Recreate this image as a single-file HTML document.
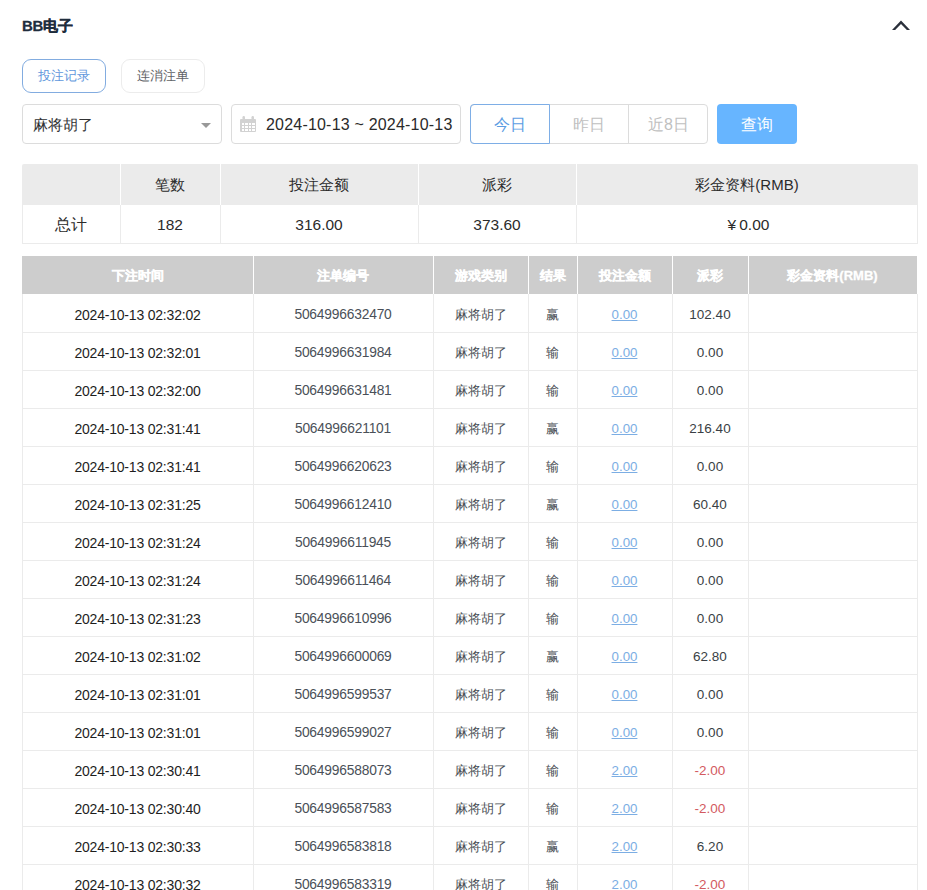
<!DOCTYPE html>
<html><head><meta charset="utf-8">
<style>
*{box-sizing:border-box;margin:0;padding:0}
html,body{width:927px;height:890px;overflow:hidden;background:#fff;font-family:"Liberation Sans",sans-serif;color:#303133}
.abs{position:absolute}
.title{position:absolute;left:22px;top:16px;font-size:15px;font-weight:bold;color:#1f2d3d;-webkit-text-stroke:0.3px #1f2d3d;line-height:20px;white-space:nowrap}
.tab{position:absolute;top:59px;height:34px;width:84px;border-radius:9px;font-size:13px;line-height:32px;text-align:center;white-space:nowrap}
.tab1{left:22px;border:1px solid #82ace0;color:#5f97dc}
.tab2{left:121px;border:1px solid #ececec;color:#606266}
.sel{position:absolute;left:22px;top:104px;width:200px;height:40px;border:1px solid #dcdcdc;border-radius:4px;font-size:15px;line-height:40px;padding-left:10px;color:#303133}
.tri{position:absolute;left:178px;top:18px;width:0;height:0;border-left:5px solid transparent;border-right:5px solid transparent;border-top:5px solid #999}
.date{position:absolute;left:231px;top:104px;width:230px;height:40px;border:1px solid #dcdcdc;border-radius:4px;font-size:16px;line-height:40px;color:#2a2a2a;white-space:nowrap}
.date .txt{position:absolute;left:34px;top:0;letter-spacing:0.2px}
.bgrp{position:absolute;left:470px;top:104px;width:238px;height:40px;border:1px solid #dcdcdc;border-radius:4px}
.bgb{position:absolute;top:-1px;height:40px;font-size:16px;line-height:41px;text-align:center;color:#bfbfbf;white-space:nowrap}
.qry{position:absolute;left:717px;top:104px;width:80px;height:40px;border-radius:4px;background:#67b5ff;color:#fff;font-size:16px;line-height:41px;text-align:center}
.sumh{position:absolute;left:22px;top:164px;width:896px;height:41px;background:#ebebeb;border-radius:2px 2px 0 0}
.sumb{position:absolute;left:22px;top:205px;width:896px;height:39px;border:1px solid #ebebeb;border-top:none}
.svl{position:absolute;top:164px;width:1px;height:41px;background:#fff}
.sbl{position:absolute;top:205px;width:1px;height:38px;background:#ebebeb}
.sh{position:absolute;top:164px;height:41px;font-size:15px;line-height:42px;text-align:center;color:#2b2b2b;white-space:nowrap}
.sb{position:absolute;top:205px;height:38px;font-size:15.5px;line-height:40px;text-align:center;color:#2b2b2b;white-space:nowrap}
.vl{position:absolute;top:294px;width:1px;height:600px;background:#ebebeb}
.hl{position:absolute;left:22px;width:896px;height:1px;background:#ebebeb}
.thead{position:absolute;left:22px;top:256px;width:895px;height:38px;background:#cdcdcd}
.thl{position:absolute;top:256px;width:1px;height:38px;background:#fff}
.th{position:absolute;top:256px;height:38px;line-height:40px;text-align:center;color:#fff;font-weight:bold;font-size:13px;white-space:nowrap;-webkit-text-stroke:0.3px #fff}
.td{position:absolute;height:38px;line-height:42px;text-align:center;font-size:13px;color:#4a4f55;white-space:nowrap}
.c1{font-size:14px;letter-spacing:-0.2px;color:#1e1e1e}
.c2{font-size:13.8px;letter-spacing:-0.2px;color:#4a5058}
.c3,.c4{color:#4a4f55;font-size:13.3px;line-height:41px}
.c5{font-size:13.3px}
.c6{color:#3a3f45;font-size:13.5px}
.lnk{color:#7caee4;text-decoration:underline}
.neg{color:#d35a60}
</style></head><body>
<div class="title"><span style="letter-spacing:-0.4px">BB</span><span style="margin-left:0.4px">电子</span></div>
<svg class="abs" style="left:0;top:0" width="927" height="40"><polygon points="901,20.4 910,30 906.9,30 901,23.9 895.1,30 892,30" fill="#2a303b"/></svg>
<div class="tab tab1">投注记录</div>
<div class="tab tab2">连消注单</div>
<div class="sel">麻将胡了<div class="tri"></div></div>
<div class="date"><svg class="abs" style="left:8px;top:11px" width="16" height="17" viewBox="0 0 16 17"><rect x="0" y="3" width="16" height="13" rx="1" fill="#d2d2d2"/><rect x="2.5" y="0" width="2.5" height="5" rx="1.2" fill="#d2d2d2"/><rect x="11.5" y="0" width="2.5" height="5" rx="1.2" fill="#d2d2d2"/><g fill="#fff"><rect x="2" y="7" width="2" height="2"/><rect x="5" y="7" width="3" height="2"/><rect x="9" y="7" width="2" height="2"/><rect x="12" y="7" width="3" height="2"/><rect x="2" y="10" width="2" height="2"/><rect x="5" y="10" width="3" height="2"/><rect x="9" y="10" width="2" height="2"/><rect x="12" y="10" width="3" height="2"/><rect x="2" y="13" width="2" height="2"/><rect x="5" y="13" width="3" height="2"/><rect x="9" y="13" width="2" height="2"/><rect x="12" y="13" width="3" height="2"/></g></svg><span class="txt">2024-10-13 ~ 2024-10-13</span></div>
<div class="bgrp">
<div class="bgb" style="left:-1px;width:80px;border:1px solid #7eaee6;border-radius:4px 0 0 4px;color:#5b9de3;line-height:39px">今日</div>
<div class="bgb" style="left:79px;width:78px">昨日</div>
<div class="bgb" style="left:157px;width:80px;border-left:1px solid #dcdcdc;line-height:41px">近8日</div>
</div>
<div class="qry">查询</div>
<div class="sumh"></div>
<div class="sumb"></div>
<div class="svl" style="left:120px"></div><div class="svl" style="left:220px"></div><div class="svl" style="left:418px"></div><div class="svl" style="left:576px"></div>
<div class="sbl" style="left:120px"></div><div class="sbl" style="left:220px"></div><div class="sbl" style="left:418px"></div><div class="sbl" style="left:576px"></div>
<div class="sh" style="left:120px;width:100px">笔数</div>
<div class="sh" style="left:220px;width:198px">投注金额</div>
<div class="sh" style="left:418px;width:158px">派彩</div>
<div class="sh" style="left:576px;width:342px">彩金资料(RMB)</div>
<div class="sb" style="left:22px;width:98px">总计</div>
<div class="sb" style="left:120px;width:100px">182</div>
<div class="sb" style="left:220px;width:198px">316.00</div>
<div class="sb" style="left:418px;width:158px">373.60</div>
<div class="sb" style="left:576px;width:342px"><span style="padding-left:3px"><span style="margin-right:3px">¥</span>0.00</span></div>
<div class="vl" style="left:22px"></div>
<div class="vl" style="left:253px"></div>
<div class="vl" style="left:433px"></div>
<div class="vl" style="left:528px"></div>
<div class="vl" style="left:577px"></div>
<div class="vl" style="left:672px"></div>
<div class="vl" style="left:748px"></div>
<div class="vl" style="left:917px"></div>
<div class="hl" style="top:332px"></div>
<div class="hl" style="top:370px"></div>
<div class="hl" style="top:408px"></div>
<div class="hl" style="top:446px"></div>
<div class="hl" style="top:484px"></div>
<div class="hl" style="top:522px"></div>
<div class="hl" style="top:560px"></div>
<div class="hl" style="top:598px"></div>
<div class="hl" style="top:636px"></div>
<div class="hl" style="top:674px"></div>
<div class="hl" style="top:712px"></div>
<div class="hl" style="top:750px"></div>
<div class="hl" style="top:788px"></div>
<div class="hl" style="top:826px"></div>
<div class="hl" style="top:864px"></div>
<div class="hl" style="top:902px"></div>
<div class="thead"></div>
<div class="thl" style="left:253px"></div>
<div class="thl" style="left:433px"></div>
<div class="thl" style="left:528px"></div>
<div class="thl" style="left:577px"></div>
<div class="thl" style="left:672px"></div>
<div class="thl" style="left:748px"></div>
<div class="th" style="left:22px;width:231px">下注时间</div>
<div class="th" style="left:253px;width:180px">注单编号</div>
<div class="th" style="left:433px;width:95px">游戏类别</div>
<div class="th" style="left:528px;width:49px">结果</div>
<div class="th" style="left:577px;width:95px">投注金额</div>
<div class="th" style="left:672px;width:76px">派彩</div>
<div class="th" style="left:748px;width:169px">彩金资料(RMB)</div>
<div class="td c1" style="left:22px;width:231px;top:294px">2024-10-13 02:32:02</div>
<div class="td c2" style="left:253px;width:180px;top:294px">5064996632470</div>
<div class="td c3" style="left:433px;width:95px;top:294px">麻将胡了</div>
<div class="td c4" style="left:528px;width:49px;top:294px">赢</div>
<div class="td c5" style="left:577px;width:95px;top:294px"><span class="lnk">0.00</span></div>
<div class="td c6" style="left:672px;width:76px;top:294px">102.40</div>
<div class="td c1" style="left:22px;width:231px;top:332px">2024-10-13 02:32:01</div>
<div class="td c2" style="left:253px;width:180px;top:332px">5064996631984</div>
<div class="td c3" style="left:433px;width:95px;top:332px">麻将胡了</div>
<div class="td c4" style="left:528px;width:49px;top:332px">输</div>
<div class="td c5" style="left:577px;width:95px;top:332px"><span class="lnk">0.00</span></div>
<div class="td c6" style="left:672px;width:76px;top:332px">0.00</div>
<div class="td c1" style="left:22px;width:231px;top:370px">2024-10-13 02:32:00</div>
<div class="td c2" style="left:253px;width:180px;top:370px">5064996631481</div>
<div class="td c3" style="left:433px;width:95px;top:370px">麻将胡了</div>
<div class="td c4" style="left:528px;width:49px;top:370px">输</div>
<div class="td c5" style="left:577px;width:95px;top:370px"><span class="lnk">0.00</span></div>
<div class="td c6" style="left:672px;width:76px;top:370px">0.00</div>
<div class="td c1" style="left:22px;width:231px;top:408px">2024-10-13 02:31:41</div>
<div class="td c2" style="left:253px;width:180px;top:408px">5064996621101</div>
<div class="td c3" style="left:433px;width:95px;top:408px">麻将胡了</div>
<div class="td c4" style="left:528px;width:49px;top:408px">赢</div>
<div class="td c5" style="left:577px;width:95px;top:408px"><span class="lnk">0.00</span></div>
<div class="td c6" style="left:672px;width:76px;top:408px">216.40</div>
<div class="td c1" style="left:22px;width:231px;top:446px">2024-10-13 02:31:41</div>
<div class="td c2" style="left:253px;width:180px;top:446px">5064996620623</div>
<div class="td c3" style="left:433px;width:95px;top:446px">麻将胡了</div>
<div class="td c4" style="left:528px;width:49px;top:446px">输</div>
<div class="td c5" style="left:577px;width:95px;top:446px"><span class="lnk">0.00</span></div>
<div class="td c6" style="left:672px;width:76px;top:446px">0.00</div>
<div class="td c1" style="left:22px;width:231px;top:484px">2024-10-13 02:31:25</div>
<div class="td c2" style="left:253px;width:180px;top:484px">5064996612410</div>
<div class="td c3" style="left:433px;width:95px;top:484px">麻将胡了</div>
<div class="td c4" style="left:528px;width:49px;top:484px">赢</div>
<div class="td c5" style="left:577px;width:95px;top:484px"><span class="lnk">0.00</span></div>
<div class="td c6" style="left:672px;width:76px;top:484px">60.40</div>
<div class="td c1" style="left:22px;width:231px;top:522px">2024-10-13 02:31:24</div>
<div class="td c2" style="left:253px;width:180px;top:522px">5064996611945</div>
<div class="td c3" style="left:433px;width:95px;top:522px">麻将胡了</div>
<div class="td c4" style="left:528px;width:49px;top:522px">输</div>
<div class="td c5" style="left:577px;width:95px;top:522px"><span class="lnk">0.00</span></div>
<div class="td c6" style="left:672px;width:76px;top:522px">0.00</div>
<div class="td c1" style="left:22px;width:231px;top:560px">2024-10-13 02:31:24</div>
<div class="td c2" style="left:253px;width:180px;top:560px">5064996611464</div>
<div class="td c3" style="left:433px;width:95px;top:560px">麻将胡了</div>
<div class="td c4" style="left:528px;width:49px;top:560px">输</div>
<div class="td c5" style="left:577px;width:95px;top:560px"><span class="lnk">0.00</span></div>
<div class="td c6" style="left:672px;width:76px;top:560px">0.00</div>
<div class="td c1" style="left:22px;width:231px;top:598px">2024-10-13 02:31:23</div>
<div class="td c2" style="left:253px;width:180px;top:598px">5064996610996</div>
<div class="td c3" style="left:433px;width:95px;top:598px">麻将胡了</div>
<div class="td c4" style="left:528px;width:49px;top:598px">输</div>
<div class="td c5" style="left:577px;width:95px;top:598px"><span class="lnk">0.00</span></div>
<div class="td c6" style="left:672px;width:76px;top:598px">0.00</div>
<div class="td c1" style="left:22px;width:231px;top:636px">2024-10-13 02:31:02</div>
<div class="td c2" style="left:253px;width:180px;top:636px">5064996600069</div>
<div class="td c3" style="left:433px;width:95px;top:636px">麻将胡了</div>
<div class="td c4" style="left:528px;width:49px;top:636px">赢</div>
<div class="td c5" style="left:577px;width:95px;top:636px"><span class="lnk">0.00</span></div>
<div class="td c6" style="left:672px;width:76px;top:636px">62.80</div>
<div class="td c1" style="left:22px;width:231px;top:674px">2024-10-13 02:31:01</div>
<div class="td c2" style="left:253px;width:180px;top:674px">5064996599537</div>
<div class="td c3" style="left:433px;width:95px;top:674px">麻将胡了</div>
<div class="td c4" style="left:528px;width:49px;top:674px">输</div>
<div class="td c5" style="left:577px;width:95px;top:674px"><span class="lnk">0.00</span></div>
<div class="td c6" style="left:672px;width:76px;top:674px">0.00</div>
<div class="td c1" style="left:22px;width:231px;top:712px">2024-10-13 02:31:01</div>
<div class="td c2" style="left:253px;width:180px;top:712px">5064996599027</div>
<div class="td c3" style="left:433px;width:95px;top:712px">麻将胡了</div>
<div class="td c4" style="left:528px;width:49px;top:712px">输</div>
<div class="td c5" style="left:577px;width:95px;top:712px"><span class="lnk">0.00</span></div>
<div class="td c6" style="left:672px;width:76px;top:712px">0.00</div>
<div class="td c1" style="left:22px;width:231px;top:750px">2024-10-13 02:30:41</div>
<div class="td c2" style="left:253px;width:180px;top:750px">5064996588073</div>
<div class="td c3" style="left:433px;width:95px;top:750px">麻将胡了</div>
<div class="td c4" style="left:528px;width:49px;top:750px">输</div>
<div class="td c5" style="left:577px;width:95px;top:750px"><span class="lnk">2.00</span></div>
<div class="td c6" style="left:672px;width:76px;top:750px"><span class="neg">-2.00</span></div>
<div class="td c1" style="left:22px;width:231px;top:788px">2024-10-13 02:30:40</div>
<div class="td c2" style="left:253px;width:180px;top:788px">5064996587583</div>
<div class="td c3" style="left:433px;width:95px;top:788px">麻将胡了</div>
<div class="td c4" style="left:528px;width:49px;top:788px">输</div>
<div class="td c5" style="left:577px;width:95px;top:788px"><span class="lnk">2.00</span></div>
<div class="td c6" style="left:672px;width:76px;top:788px"><span class="neg">-2.00</span></div>
<div class="td c1" style="left:22px;width:231px;top:826px">2024-10-13 02:30:33</div>
<div class="td c2" style="left:253px;width:180px;top:826px">5064996583818</div>
<div class="td c3" style="left:433px;width:95px;top:826px">麻将胡了</div>
<div class="td c4" style="left:528px;width:49px;top:826px">赢</div>
<div class="td c5" style="left:577px;width:95px;top:826px"><span class="lnk">2.00</span></div>
<div class="td c6" style="left:672px;width:76px;top:826px">6.20</div>
<div class="td c1" style="left:22px;width:231px;top:864px">2024-10-13 02:30:32</div>
<div class="td c2" style="left:253px;width:180px;top:864px">5064996583319</div>
<div class="td c3" style="left:433px;width:95px;top:864px">麻将胡了</div>
<div class="td c4" style="left:528px;width:49px;top:864px">输</div>
<div class="td c5" style="left:577px;width:95px;top:864px"><span class="lnk">2.00</span></div>
<div class="td c6" style="left:672px;width:76px;top:864px"><span class="neg">-2.00</span></div>
</body></html>
